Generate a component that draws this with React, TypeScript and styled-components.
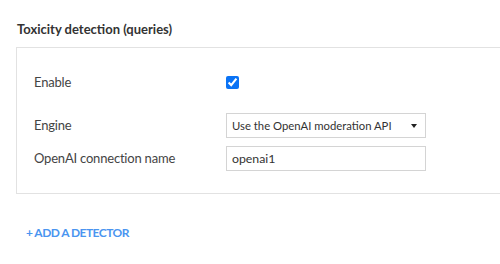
import styled, { createGlobalStyle } from 'styled-components';

const GlobalStyle = createGlobalStyle`
  html, body {
    margin: 0;
    padding: 0;
    background: #fff;
    overflow: hidden;
  }
  body {
    font-family: Lato, "Noto Sans", sans-serif;
    color: #333;
  }
`;

const Page = styled.div`
  width: 500px;
  height: 264px;
  padding: 20px 0 0 16px;
  box-sizing: border-box;
  overflow: hidden;
`;

const SectionTitle = styled.div`
  font-size: 13px;
  font-weight: 700;
  line-height: 18px;
  color: #333;
  margin: 0 0 9px 1px;
`;

const Card = styled.div`
  width: 520px;
  box-sizing: border-box;
  border: 1px solid #e2e2e2;
  padding: 22px 17px 22px;
  display: grid;
  grid-template-columns: 192px 200px;
  row-gap: 8px;
  align-items: center;
`;

const Label = styled.div<{ $gap?: number }>`
  font-size: 13px;
  letter-spacing: -0.2px;
  line-height: 25px;
  color: #444;
  margin-bottom: ${p => p.$gap ?? 0}px;
`;

const Cell = styled.div<{ $gap?: number }>`
  height: 25px;
  display: flex;
  align-items: center;
  margin-bottom: ${p => p.$gap ?? 0}px;
`;

const Check = styled.input`
  width: 13px;
  height: 13px;
  margin: 0;
  accent-color: #0a73f5;
`;

const SelectBox = styled.div`
  position: relative;
  width: 200px;
  height: 25px;
  box-sizing: border-box;
  border: 1px solid #d4d4d4;
  display: flex;
  align-items: center;
  padding: 0 5px;
  font-size: 11.3px;
  white-space: nowrap;
  color: #333;
  background: #fff;
`;

const Caret = styled.span`
  position: absolute;
  right: 8px;
  top: 10px;
  width: 0;
  height: 0;
  border-left: 3.5px solid transparent;
  border-right: 3.5px solid transparent;
  border-top: 4px solid #222;
`;

const TextInput = styled.input`
  width: 200px;
  height: 25px;
  box-sizing: border-box;
  border: 1px solid #d4d4d4;
  padding: 0 5px;
  font-family: inherit;
  font-size: 12.3px;
  color: #333;
  outline: none;
`;

const AddLink = styled.div`
  margin: 30px 0 0 10px;
  font-size: 12px;
  font-weight: 700;
  line-height: 18px;
  color: #4a95f0;
  letter-spacing: -0.55px;
`;

export default function App() {
  return (
    <Page>
      <GlobalStyle />
      <SectionTitle>Toxicity detection (queries)</SectionTitle>
      <Card>
        <Label $gap={10}>Enable</Label>
        <Cell $gap={10}>
          <Check type="checkbox" defaultChecked />
        </Cell>
        <Label>Engine</Label>
        <SelectBox>
          Use the OpenAI moderation API
          <Caret />
        </SelectBox>
        <Label>OpenAI connection name</Label>
        <TextInput defaultValue="openai1" />
      </Card>
      <AddLink>+ ADD A DETECTOR</AddLink>
    </Page>
  );
}
